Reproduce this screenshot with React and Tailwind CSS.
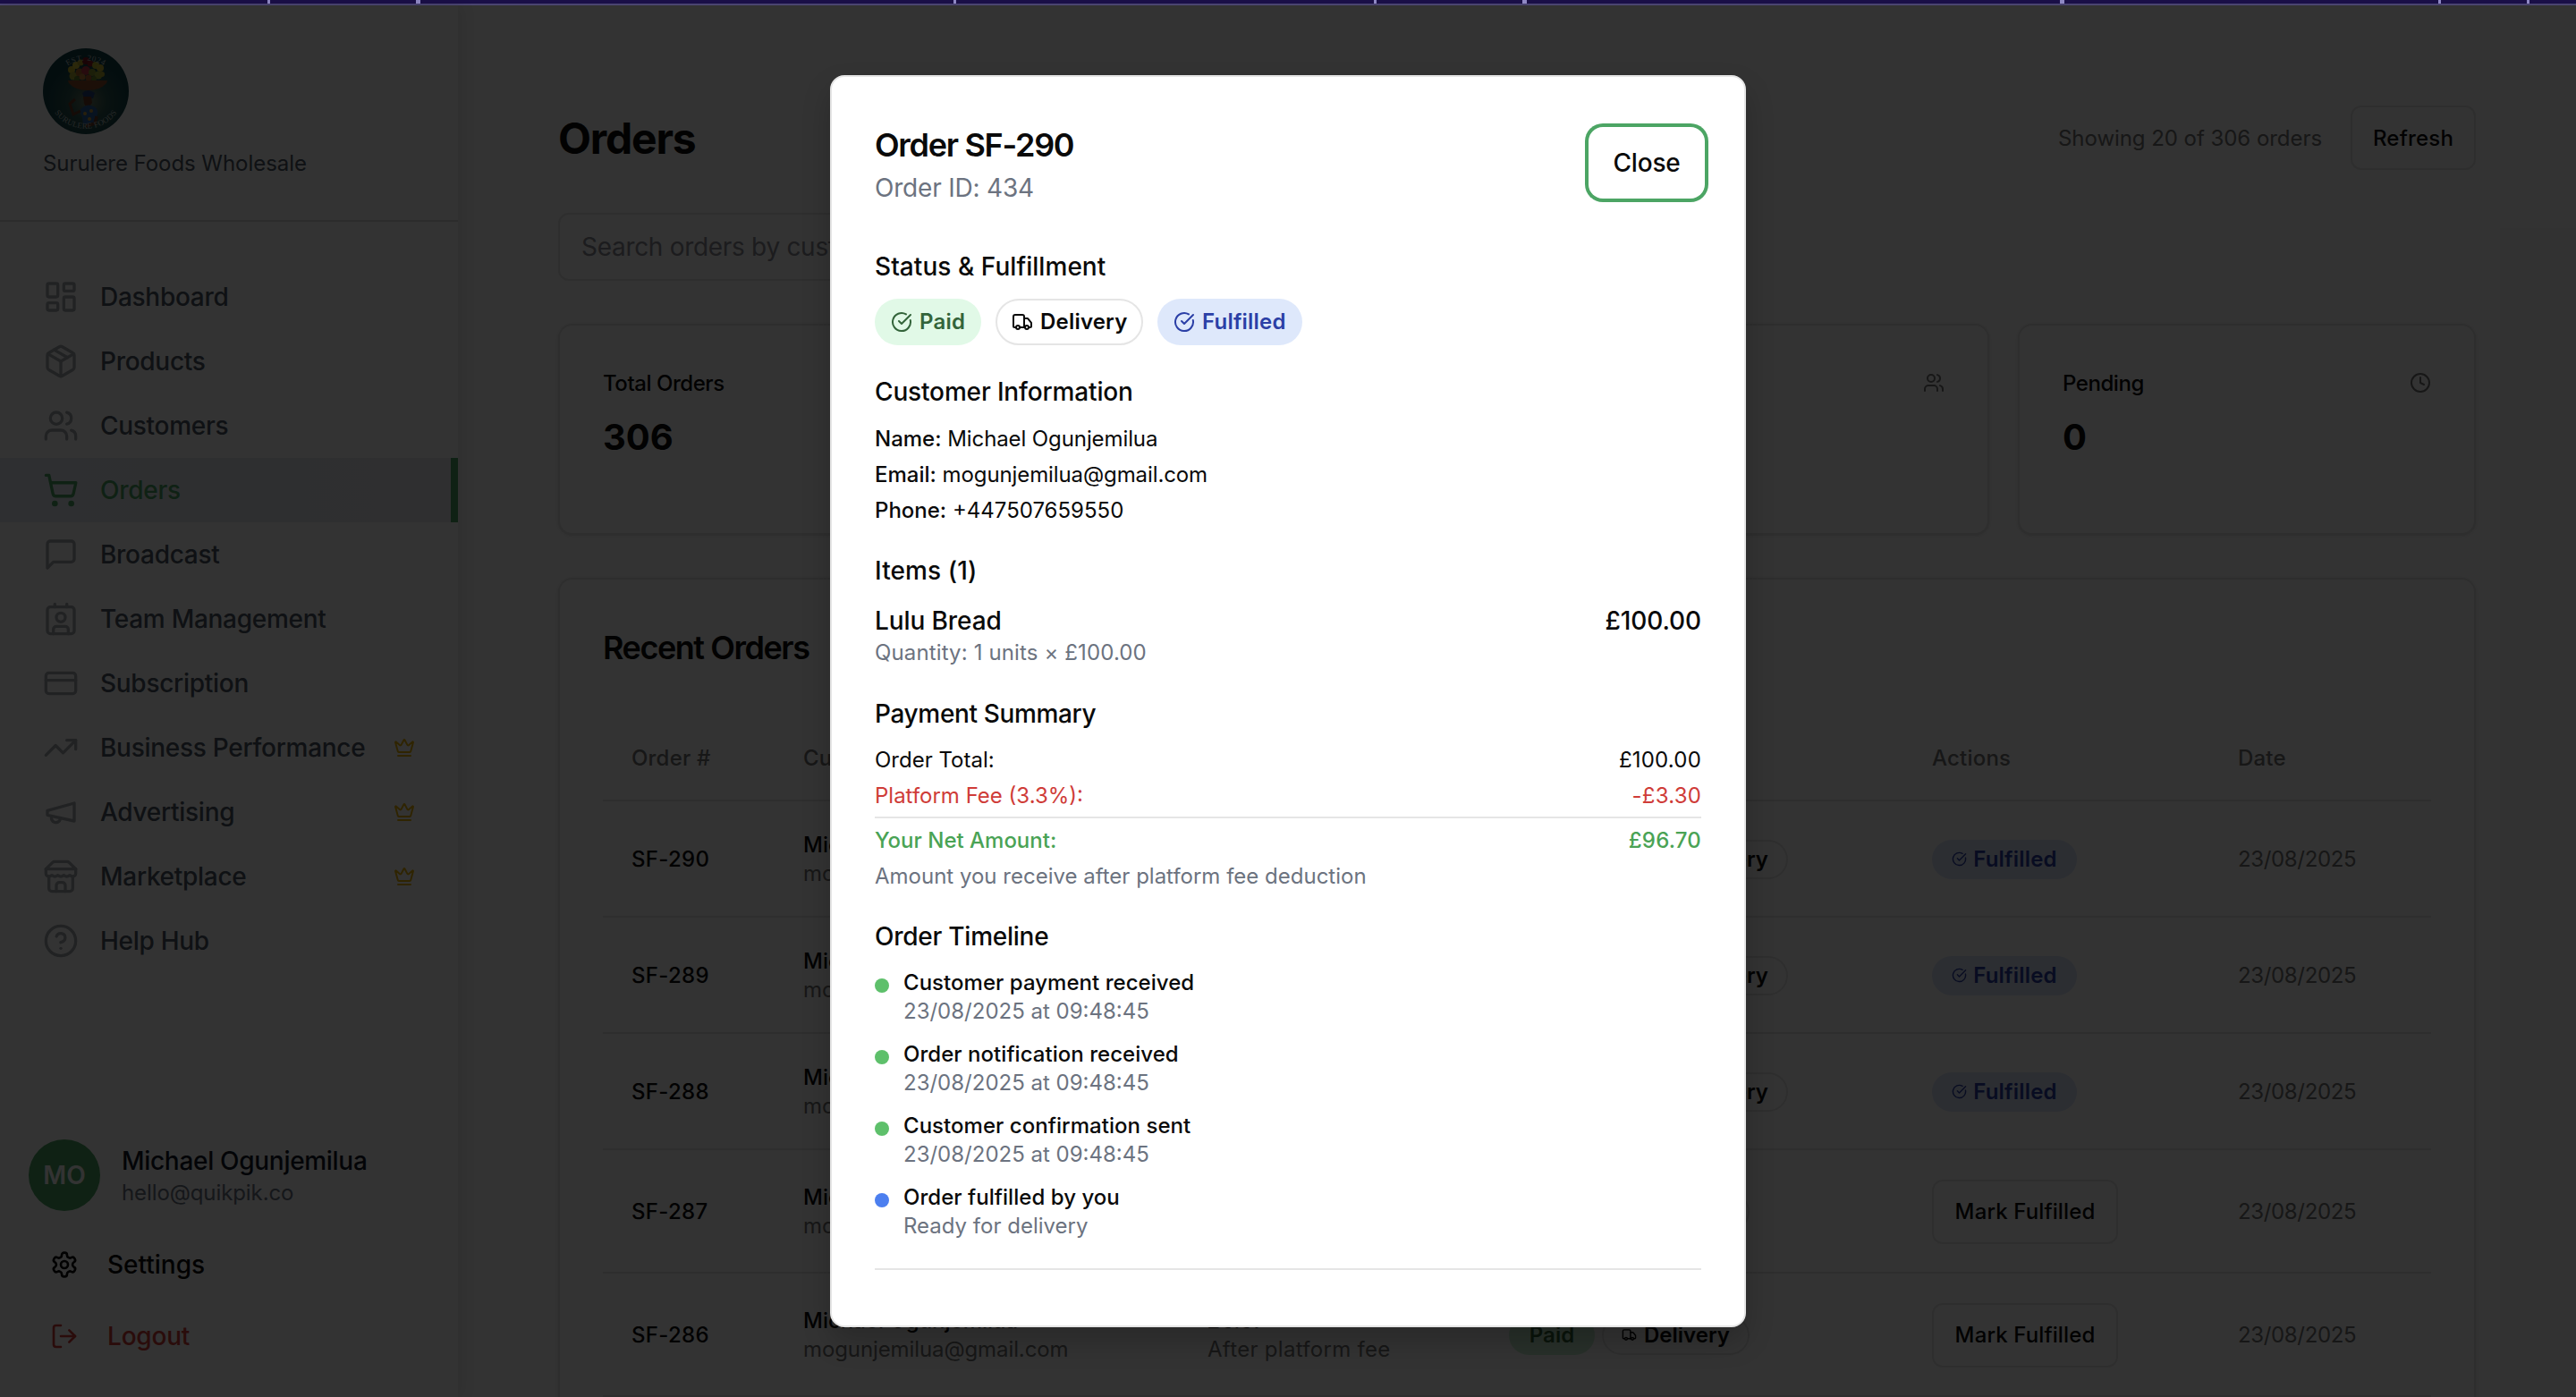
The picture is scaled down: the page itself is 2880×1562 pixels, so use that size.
import React from 'react';
import {
  LayoutDashboard,
  ShoppingCart,
  CreditCard,
  TrendingUp,
  Truck,
  CircleCheckBig,
  Clock,
} from 'lucide-react';

function Icon({ className, children }) {
  return (
    <svg
      viewBox="0 0 24 24"
      fill="none"
      stroke="currentColor"
      strokeWidth="2"
      strokeLinecap="round"
      strokeLinejoin="round"
      className={className}
    >
      {children}
    </svg>
  );
}

const PackageIcon = ({ className }) => (
  <Icon className={className}>
    <path d="m7.5 4.27 9 5.15" />
    <path d="M21 8a2 2 0 0 0-1-1.73l-7-4a2 2 0 0 0-2 0l-7 4A2 2 0 0 0 3 8v8a2 2 0 0 0 1 1.73l7 4a2 2 0 0 0 2 0l7-4A2 2 0 0 0 21 16Z" />
    <path d="m3.3 7 8.7 5 8.7-5" />
    <path d="M12 22V12" />
  </Icon>
);

const UsersIcon = ({ className }) => (
  <Icon className={className}>
    <path d="M16 21v-2a4 4 0 0 0-4-4H6a4 4 0 0 0-4 4v2" />
    <circle cx="9" cy="7" r="4" />
    <path d="M22 21v-2a4 4 0 0 0-3-3.87" />
    <path d="M16 3.13a4 4 0 0 1 0 7.75" />
  </Icon>
);

const MessageIcon = ({ className }) => (
  <Icon className={className}>
    <path d="M21 15a2 2 0 0 1-2 2H7l-4 4V5a2 2 0 0 1 2-2h14a2 2 0 0 1 2 2z" />
  </Icon>
);

const ContactIcon = ({ className }) => (
  <Icon className={className}>
    <path d="M17 22v-3a2 2 0 0 0-2-2H9a2 2 0 0 0-2 2v3" />
    <rect width="18" height="18" x="3" y="4" rx="2" />
    <circle cx="12" cy="11" r="3" />
    <path d="M8 2v2" />
    <path d="M16 2v2" />
  </Icon>
);

const MegaphoneIcon = ({ className }) => (
  <Icon className={className}>
    <path d="m3 11 18-5v12L3 14v-3z" />
    <path d="M11.6 16.8a3 3 0 1 1-5.8-1.6" />
  </Icon>
);

const StoreIcon = ({ className }) => (
  <Icon className={className}>
    <path d="m2 7 4.41-4.41A2 2 0 0 1 7.83 2h8.34a2 2 0 0 1 1.42.59L22 7" />
    <path d="M4 12v8a2 2 0 0 0 2 2h12a2 2 0 0 0 2-2v-8" />
    <path d="M15 22v-4a2 2 0 0 0-2-2h-2a2 2 0 0 0-2 2v4" />
    <path d="M2 7h20" />
    <path d="M22 7v3a2 2 0 0 1-2 2a2.7 2.7 0 0 1-1.59-.63.7.7 0 0 0-.82 0A2.7 2.7 0 0 1 16 12a2.7 2.7 0 0 1-1.59-.63.7.7 0 0 0-.82 0A2.7 2.7 0 0 1 12 12a2.7 2.7 0 0 1-1.59-.63.7.7 0 0 0-.82 0A2.7 2.7 0 0 1 8 12a2.7 2.7 0 0 1-1.59-.63.7.7 0 0 0-.82 0A2.7 2.7 0 0 1 4 12a2 2 0 0 1-2-2V7" />
  </Icon>
);

const HelpIcon = ({ className }) => (
  <Icon className={className}>
    <circle cx="12" cy="12" r="10" />
    <path d="M9.09 9a3 3 0 0 1 5.83 1c0 2-3 3-3 3" />
    <path d="M12 17h.01" />
  </Icon>
);

const CrownIcon = ({ className }) => (
  <Icon className={className}>
    <path d="M11.562 3.266a.5.5 0 0 1 .876 0L15.39 8.87a1 1 0 0 0 1.516.294L21.183 5.5a.5.5 0 0 1 .798.519l-2.834 10.246a1 1 0 0 1-.956.734H5.81a1 1 0 0 1-.957-.734L2.02 6.02a.5.5 0 0 1 .798-.519l4.276 3.664a1 1 0 0 0 1.516-.294z" />
    <path d="M5 21h14" />
  </Icon>
);

const SettingsIcon = ({ className }) => (
  <Icon className={className}>
    <path d="M12.22 2h-.44a2 2 0 0 0-2 2v.18a2 2 0 0 1-1 1.73l-.43.25a2 2 0 0 1-2 0l-.15-.08a2 2 0 0 0-2.73.73l-.22.38a2 2 0 0 0 .73 2.73l.15.1a2 2 0 0 1 1 1.72v.51a2 2 0 0 1-1 1.74l-.15.09a2 2 0 0 0-.73 2.73l.22.38a2 2 0 0 0 2.73.73l.15-.08a2 2 0 0 1 2 0l.43.25a2 2 0 0 1 1 1.73V20a2 2 0 0 0 2 2h.44a2 2 0 0 0 2-2v-.18a2 2 0 0 1 1-1.73l.43-.25a2 2 0 0 1 2 0l.15.08a2 2 0 0 0 2.73-.73l.22-.39a2 2 0 0 0-.73-2.73l-.15-.08a2 2 0 0 1-1-1.74v-.5a2 2 0 0 1 1-1.74l.15-.09a2 2 0 0 0 .73-2.73l-.22-.38a2 2 0 0 0-2.73-.73l-.15.08a2 2 0 0 1-2 0l-.43-.25a2 2 0 0 1-1-1.73V4a2 2 0 0 0-2-2z" />
    <circle cx="12" cy="12" r="3" />
  </Icon>
);

const LogoutIcon = ({ className }) => (
  <Icon className={className}>
    <path d="M9 21H5a2 2 0 0 1-2-2V5a2 2 0 0 1 2-2h4" />
    <path d="m16 17 5-5-5-5" />
    <path d="M21 12H9" />
  </Icon>
);

function Logo() {
  const fruit = [
    [32, 24, 4, '#c9b82c'], [37, 19, 4, '#d8c63a'], [42, 16, 3.5, '#b8a828'],
    [48, 14, 4, '#7c1520'], [53, 17, 3.5, '#8f1a24'], [59, 19, 4, '#b7b42f'],
    [64, 22, 4, '#c8b634'], [34, 31, 4.5, '#a8a832'], [41, 27, 4.5, '#b06a2c'],
    [48, 25, 5, '#c23a48'], [55, 27, 4, '#8c9a30'], [62, 30, 4.5, '#9fae34'],
    [38, 34, 3, '#5f7d2a'], [44, 32, 3.5, '#c5803a'], [51, 33, 3.5, '#b5622e'],
    [57, 34, 3, '#6f8a2c'], [66, 29, 3, '#b5a82e'],
  ];
  return (
    <svg viewBox="0 0 96 96" className="size-24">
      <defs>
        <radialGradient id="glow" cx="0.52" cy="0.62" r="0.5">
          <stop offset="0" stopColor="#6f7f66" />
          <stop offset="0.45" stopColor="#2b5650" />
          <stop offset="1" stopColor="#0f4048" />
        </radialGradient>
        <path id="arcTop" d="M12 42 A37 37 0 0 1 84 42" />
        <path id="arcBottom" d="M6 56 A43 43 0 0 0 90 56" />
      </defs>
      <circle cx="48" cy="48" r="48" fill="url(#glow)" />
      {fruit.map(([x, y, r, c], i) => (
        <circle key={i} cx={x} cy={y} r={r} fill={c} />
      ))}
      <path d="M28 36h44l-1 3q-7 8-21 8t-21-8z" fill="#8a4a28" />
      <path d="M44 50q6-6 14 0l-2 6H46z" fill="#23437c" />
      <path d="M45 54h9l1 7-3 4h-4l-2-3z" fill="#6a3a24" />
      <path d="M41 70q6-8 13-6 8 2 7 9l-2 8-4 4H45l-1-8z" fill="#2c62a0" />
      <path d="M42 70 34 74 30 62 36 57" stroke="#6a3a24" strokeWidth="3" fill="none" />
      <path d="M60 76l-2 8-10 3" stroke="#6a3a24" strokeWidth="3.5" fill="none" />
      <circle cx="47" cy="73" r="2" fill="#c89a3a" />
      <circle cx="54" cy="70" r="2" fill="#c89a3a" />
      <circle cx="52" cy="79" r="2" fill="#c89a3a" />
      <text fontFamily="Liberation Serif, serif" fontSize="9" letterSpacing="0.6" fill="#b9c4c2" textAnchor="middle">
        <textPath href="#arcTop" startOffset="50%">EST. 2024</textPath>
      </text>
      <text fontFamily="Liberation Serif, serif" fontSize="9" letterSpacing="0.2" fill="#b9c4c2" textAnchor="middle">
        <textPath href="#arcBottom" startOffset="50%">SURULERE FOODS</textPath>
      </text>
    </svg>
  );
}

const NAV = [
  { label: 'Dashboard', icon: LayoutDashboard },
  { label: 'Products', icon: PackageIcon },
  { label: 'Customers', icon: UsersIcon },
  { label: 'Orders', icon: ShoppingCart, active: true },
  { label: 'Broadcast', icon: MessageIcon },
  { label: 'Team Management', icon: ContactIcon },
  { label: 'Subscription', icon: CreditCard },
  { label: 'Business Performance', icon: TrendingUp, premium: true },
  { label: 'Advertising', icon: MegaphoneIcon, premium: true },
  { label: 'Marketplace', icon: StoreIcon, premium: true },
  { label: 'Help Hub', icon: HelpIcon },
];

function Sidebar() {
  return (
    <aside className="relative flex w-[512px] shrink-0 flex-col bg-white shadow-[4px_0_16px_rgba(0,0,0,0.09)]">
      <div className="flex h-[242px] flex-col border-b-2 border-[#dcdcdc] px-12 pt-12">
        <Logo />
        <div className="mt-[17px] text-[24px] leading-8 tracking-[-0.05px] text-[#4b5563]">Surulere Foods Wholesale</div>
      </div>
      <nav className="pt-12">
        {NAV.map(({ label, icon: I, active, premium }) => (
          <div
            key={label}
            className={
              active
                ? 'flex h-[72px] items-center gap-6 border-r-8 border-[#4ca564] bg-linear-to-r from-[#e3ebf3] to-[#e9ebed] pl-12 pr-10 text-[#4ca564]'
                : 'flex h-[72px] items-center gap-6 px-12 text-[#4b5563]'
            }
          >
            <I className={active ? 'size-10' : 'size-10 text-[#a5a9af]'} />
            <span className="text-[28px] font-medium tracking-[-0.28px] whitespace-nowrap">{label}</span>
            {premium && <CrownIcon className="ml-auto size-6 text-[#eab308]" />}
          </div>
        ))}
      </nav>
      <div className="mt-auto px-8 pb-8">
        <div className="flex items-center gap-6">
          <div className="flex size-20 items-center justify-center rounded-full bg-[#4ca564] text-[28px] font-semibold text-white">
            MO
          </div>
          <div>
            <div className="text-[28px] leading-10 font-medium tracking-[-0.3px] text-[#111827]">Michael Ogunjemilua</div>
            <div className="text-[24px] leading-8 tracking-[-0.1px] text-[#6b7280]">hello@quikpik.co</div>
          </div>
        </div>
        <div className="mt-6 flex h-[72px] items-center gap-8 px-6 text-[28px] font-medium text-[#0a0a0a]">
          <SettingsIcon className="size-8" />
          Settings
        </div>
        <div className="mt-2 flex h-[72px] items-center gap-8 px-6 text-[28px] font-medium tracking-[-0.2px] text-[#cf3c38]">
          <LogoutIcon className="size-8" />
          Logout
        </div>
      </div>
    </aside>
  );
}

const STATS = [
  { label: 'Total Orders', value: '306', icon: PackageIcon },
  { label: 'Revenue', value: '£0.00', icon: CreditCard },
  { label: 'Paid Orders', value: '306', icon: UsersIcon },
  { label: 'Pending', value: '0', icon: Clock },
];

const ORDERS = [
  { id: 'SF-290', total: '£96.70', done: true, h: 'h-[130px]' },
  { id: 'SF-289', total: '£96.70', done: true, h: 'h-[130px]' },
  { id: 'SF-288', total: '£96.70', done: true, h: 'h-[130px]' },
  { id: 'SF-287', total: '£6.67', done: false, h: 'h-[138px]' },
  { id: 'SF-286', total: '£6.67', done: false, h: 'h-[138px]' },
];

const COLS = 'grid grid-cols-[192px_452px_337px_473px_342px_216px] pl-8';

function Main() {
  return (
    <main className="flex min-w-0 flex-1 flex-col overflow-hidden bg-[#fcfcfc] px-28 pt-28 text-[24px] text-[#0a0a0a]">
      <div className="flex h-[72px] shrink-0 items-center justify-between">
        <h1 className="pt-px text-[48px] font-bold tracking-[-1.2px]">Orders</h1>
        <div className="flex items-center gap-8">
          <span className="pt-px tracking-[-0.05px] text-[#737373]">Showing 20 of 306 orders</span>
          <button className="h-[72px] w-[140px] rounded-xl border-2 border-[#e5e5e5] bg-white pt-px font-medium tracking-[0.2px]">
            Refresh
          </button>
        </div>
      </div>
      <div className="mt-12 flex h-[76px] w-[896px] shrink-0 items-center overflow-hidden rounded-xl border-2 border-[#e5e5e5] bg-white px-6 text-[28px] tracking-[-0.3px] whitespace-nowrap text-[#8c8c94]">
        Search orders by customer name or order number...
      </div>
      <div className="mt-12 grid shrink-0 grid-cols-4 gap-8">
        {STATS.map(({ label, value, icon: I }) => (
          <div key={label} className="h-[236px] rounded-2xl border-2 border-[#e5e5e5] bg-white p-12 shadow-sm">
            <div className="flex h-8 items-center justify-between">
              <span className="pt-px font-medium tracking-[-0.45px]">{label}</span>
              <I className="size-6 text-[#737373]" />
            </div>
            <div className="mt-[17px] text-[40px] leading-[56px] font-bold">{value}</div>
          </div>
        ))}
      </div>
      <div className="mt-12 flex h-[1100px] shrink-0 flex-col rounded-2xl border-2 border-[#e5e5e5] bg-white px-12 shadow-sm">
        <div className="mt-12 h-14 text-[36px] leading-[56px] font-semibold tracking-[-1.45px]">Recent Orders</div>
        <div className={`${COLS} mt-12 h-24 items-center border-b-2 border-[#e5e5e5] pt-0.5 font-medium tracking-[0.2px] text-[#737373]`}>
          <span>Order #</span>
          <span>Customer</span>
          <span>Total</span>
          <span>Status</span>
          <span>Actions</span>
          <span>Date</span>
        </div>
        {ORDERS.map((o) => (
          <div key={o.id} className={`${COLS} ${o.h} items-center border-b-2 border-[#e5e5e5] pt-px leading-8`}>
            <span className="font-medium tracking-[0.3px]">{o.id}</span>
            <div>
              <div className="font-medium">Michael Ogunjemilua</div>
              <div className="tracking-[-0.1px] text-[#737373]">mogunjemilua@gmail.com</div>
            </div>
            <div>
              <div className="font-medium">{o.total}</div>
              <div className="tracking-[0.3px] text-[#737373]">After platform fee</div>
            </div>
            <div className="flex gap-2">
              {o.done ? (
                <span className="flex h-11 w-[139px] items-center justify-center rounded-full bg-[#dee8fb] font-semibold text-[#2b3fa6]">
                  Fulfilled
                </span>
              ) : (
                <span className="flex h-11 w-24 items-center justify-center rounded-full bg-[#c9f0d3] font-semibold text-[#33643a]">
                  Paid
                </span>
              )}
              <span className="flex h-11 w-[165px] items-center justify-center gap-2 rounded-full border-2 border-[#e5e5e5] font-semibold">
                <Truck className="size-[17px]" />
                Delivery
              </span>
            </div>
            <div>
              {o.done ? (
                <span className="flex h-11 w-[162px] items-center justify-center gap-[7px] rounded-full bg-[#dbe4fb] font-semibold tracking-[0.2px] text-[#2b3fa6]">
                  <CircleCheckBig className="size-[17px]" />
                  Fulfilled
                </span>
              ) : (
                <button className="h-[72px] w-[208px] rounded-xl border-2 border-[#e5e5e5] bg-white font-medium tracking-[0.12px]">
                  Mark Fulfilled
                </button>
              )}
            </div>
            <span className="tracking-[-0.35px] text-[#737373]">23/08/2025</span>
          </div>
        ))}
      </div>
    </main>
  );
}

function Heading({ className, children }) {
  return <h3 className={`text-[28px] leading-10 font-medium ${className}`}>{children}</h3>;
}

const TIMELINE = [
  ['Customer payment received', '23/08/2025 at 09:48:45', 'bg-[#5ec06b]'],
  ['Order notification received', '23/08/2025 at 09:48:45', 'bg-[#5ec06b]'],
  ['Customer confirmation sent', '23/08/2025 at 09:48:45', 'bg-[#5ec06b]'],
  ['Order fulfilled by you', 'Ready for delivery', 'bg-[#4c7fef]'],
];

function OrderDialog() {
  return (
    <div className="flex h-[1400px] w-[1024px] flex-col overflow-hidden rounded-2xl border-2 border-[#e5e5e5] bg-white p-12 text-[24px] text-[#0a0a0a] shadow-[0_16px_32px_rgba(0,0,0,0.2)]">
      <div className="flex h-36 shrink-0 items-start justify-between">
        <div>
          <h2 className="text-[36px] leading-[56px] font-semibold tracking-[-1.3px]">Order SF-290</h2>
          <p className="text-[28px] leading-10 tracking-[-0.2px] text-[#6c7380]">Order ID: 434</p>
        </div>
        <button className="mt-3 h-[72px] w-[122px] rounded-xl bg-white text-[28px] font-medium tracking-[-0.2px] ring-4 ring-[#4ca564] ring-offset-4 ring-offset-white">
          Close
        </button>
      </div>

      <Heading className="tracking-[0.05px]">Status &amp; Fulfillment</Heading>
      <div className="mt-4 flex gap-4 font-semibold tracking-[0.2px]">
        <span className="flex h-[52px] w-[119px] items-center gap-2 rounded-full bg-[#e1f9e7] px-[18px] text-[#33643a]">
          <CircleCheckBig className="size-6 shrink-0" />
          Paid
        </span>
        <span className="flex h-[52px] w-[165px] items-center gap-2 rounded-full border-2 border-[#e5e5e5] px-4">
          <Truck className="size-6 shrink-0" />
          Delivery
        </span>
        <span className="flex h-[52px] w-[162px] items-center gap-2 rounded-full bg-[#dee8fb] px-[18px] text-[#2b3fa6]">
          <CircleCheckBig className="size-6 shrink-0" />
          Fulfilled
        </span>
      </div>

      <Heading className="mt-8 tracking-[-0.15px]">Customer Information</Heading>
      <div className="mt-[13px] leading-10">
        <p><span className="font-medium">Name:</span> <span className="tracking-[-0.1px]">Michael Ogunjemilua</span></p>
        <p><span className="font-medium">Email:</span> <span className="tracking-[-0.1px]">mogunjemilua@gmail.com</span></p>
        <p><span className="font-medium">Phone:</span> +447507659550</p>
      </div>

      <Heading className="mt-[27px] tracking-[0.1px]">Items (1)</Heading>
      <div className="mt-4 flex items-start justify-between text-[28px] leading-10 font-medium tracking-[-0.1px]">
        <span>Lulu Bread</span>
        <span>£100.00</span>
      </div>
      <p className="leading-8 tracking-[0.13px] text-[#6c7380]">Quantity: 1 units × £100.00</p>

      <Heading className="mt-8 tracking-[-0.35px]">Payment Summary</Heading>
      <div className="mt-3 leading-10">
        <div className="flex justify-between"><span>Order Total:</span><span className="tracking-[0.2px]">£100.00</span></div>
        <div className="flex justify-between text-[#cf3c38]"><span>Platform Fee (3.3%):</span><span className="tracking-[0.2px]">-£3.30</span></div>
        <div className="mt-[3px] flex justify-between border-t-2 border-[#e5e5e5] pt-[5px] font-medium text-[#4aa355]">
          <span>Your Net Amount:</span><span className="tracking-[0.2px]">£96.70</span>
        </div>
        <p className="text-[#6c7380]">Amount you receive after platform fee deduction</p>
      </div>

      <Heading className="mt-[27px] tracking-[-0.25px]">Order Timeline</Heading>
      <div className="mt-4 flex flex-col gap-4 leading-8">
        {TIMELINE.map(([title, sub, dot]) => (
          <div key={title} className="flex gap-4">
            <span className={`mt-[11px] size-4 rounded-full ${dot}`} />
            <div>
              <p className="font-medium tracking-[0.04px]">{title}</p>
              <p className="text-[#6c7380]">{sub}</p>
            </div>
          </div>
        ))}
      </div>
      <div className="mt-[31px] h-0.5 shrink-0 bg-[#e5e5e5]" />
    </div>
  );
}

const STARS = [[299, 3], [465, 5], [1066, 3], [1536, 3], [1702, 5], [2303, 5], [2726, 3], [2825, 3]];

export default function App() {
  return (
    <div className="flex h-[1562px] w-[2880px] flex-col overflow-hidden bg-[#1a0f47] font-[Inter,sans-serif]">
      <div className="h-1.5 shrink-0 border-b-2 border-[#4a4470]">
        <svg viewBox="0 0 2880 4" className="block h-1 w-[2880px]">
          {STARS.map(([x, w]) => (
            <rect key={x} x={x} y="0" width={w} height="4" fill="#8f88c4" />
          ))}
        </svg>
      </div>
      <div className="relative flex h-[1556px] shrink-0">
        <Sidebar />
        <Main />
        <div className="absolute inset-0 flex items-center justify-center bg-black/80">
          <OrderDialog />
        </div>
      </div>
    </div>
  );
}
